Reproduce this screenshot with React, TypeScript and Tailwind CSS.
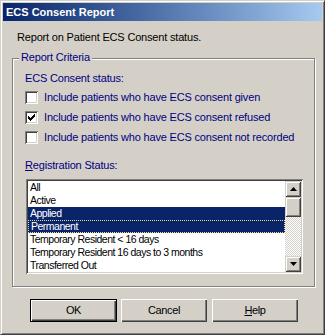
import React from "react";

const raised =
  "shadow-[inset_1px_1px_0_#d4d0c8,inset_-1px_-1px_0_#404040,inset_2px_2px_0_#fff,inset_-2px_-2px_0_#808080]";
const button =
  "shadow-[inset_1px_1px_0_#fff,inset_-1px_-1px_0_#404040,inset_-2px_-2px_0_#808080]";
const sunken =
  "shadow-[inset_1px_1px_0_#808080,inset_-1px_-1px_0_#fff,inset_2px_2px_0_#404040,inset_-2px_-2px_0_#d4d0c8]";

function Check() {
  const cols = [2, 3, 4, 3, 2, 1, 0];
  return (
    <svg width="7" height="7" viewBox="0 0 7 7">
      {cols.map((y, x) => (
        <rect key={x} x={x} y={y} width="1" height="3" fill="#000" />
      ))}
    </svg>
  );
}

function CheckRow({ label, checked }: { label: string; checked?: boolean }) {
  return (
    <div className="flex h-[20px] items-center">
      <div className={`flex h-[13px] w-[13px] items-center justify-center bg-white ${sunken}`}>
        {checked && <Check />}
      </div>
      <span className="ml-[6px] text-[#000080]">{label}</span>
    </div>
  );
}

function Arrow({ down }: { down?: boolean }) {
  return (
    <svg width="7" height="4" viewBox="0 0 7 4">
      <polygon points={down ? "0,0 7,0 3.5,4" : "3.5,0 7,4 0,4"} fill="#000" />
    </svg>
  );
}

const items = [
  "All",
  "Active",
  "Applied",
  "Permanent",
  "Temporary Resident < 16 days",
  "Temporary Resident 16 days to 3 months",
  "Transferred Out",
];

export default function App() {
  return (
    <div className="box-border flex h-[335px] w-[325px] flex-col border border-t-[#d4d0c8] border-l-[#d4d0c8] border-r-[#404040] border-b-[#404040] bg-[#d4d0c8] p-[2px] font-['Liberation_Sans',Arial,sans-serif] text-[11px] leading-[13px] tracking-[-0.18px] text-black shadow-[inset_1px_1px_0_#fff,inset_-1px_-1px_0_#808080]">
      <div className="flex h-[18px] shrink-0 items-center bg-linear-to-r from-[#0a246a] to-[#a6caf0] pl-[3px] text-[11px] font-bold tracking-normal text-white">
        ECS Consent Report
      </div>

      <div className="mt-[10px] pl-[14px]">Report on Patient ECS Consent status.</div>

      <div className="relative ml-[9px] mt-[14px] box-border h-[229px] w-[303px] shrink-0 border border-[#808080] pl-[12px] pt-[13px] shadow-[inset_1px_1px_0_#fff,1px_1px_0_#fff]">
        <span className="absolute -top-[8px] left-[6px] bg-[#d4d0c8] px-[2px] text-[#000080]">
          Report Criteria
        </span>
        <div className="text-[#000080]">ECS Consent status:</div>
        <div className="mt-[2px]">
          <CheckRow label="Include patients who have ECS consent given" />
          <CheckRow label="Include patients who have ECS consent refused" checked />
          <CheckRow label="Include patients who have ECS consent not recorded" />
        </div>
        <div className="mt-[12px] text-[#000080]">
          <span className="underline">R</span>egistration Status:
        </div>
        <div className={`ml-[1px] mt-[7px] box-border flex h-[95px] w-[277px] bg-white p-[2px] text-[10.5px] tracking-[-0.5px] ${sunken}`}>
          <div className="flex-1">
            {items.map((it) => {
              const sel = it === "Applied" || it === "Permanent";
              const focus = it === "Permanent";
              return (
                <div
                  key={it}
                  className={`box-border h-[13px] whitespace-nowrap pl-[2px] ${
                    sel ? "bg-[#0a246a] text-white" : ""
                  } ${focus ? "border border-dotted border-[#f3d98c] pl-[1px] leading-[11px]" : ""}`}
                >
                  {it}
                </div>
              );
            })}
          </div>
          <div className="flex w-[16px] flex-col">
            <div className={`flex h-[16px] items-center justify-center bg-[#d4d0c8] ${raised}`}>
              <Arrow />
            </div>
            <div className={`h-[20px] bg-[#d4d0c8] ${raised}`} />
            <div className="flex-1 bg-[image:repeating-conic-gradient(#fff_0_25%,#d4d0c8_0_50%)] bg-[length:2px_2px]" />
            <div className={`flex h-[16px] items-center justify-center bg-[#d4d0c8] ${raised}`}>
              <Arrow down />
            </div>
          </div>
        </div>
      </div>

      <div className="ml-[27px] mt-[12px] flex gap-[4px] text-[11px] tracking-[-0.4px]">
        <div className="box-border h-[23px] w-[87px] border border-black">
          <div className={`flex h-full items-center justify-center ${button}`}>OK</div>
        </div>
        <div className={`flex h-[23px] w-[86px] items-center justify-center ${button}`}>Cancel</div>
        <div className={`ml-[1px] flex h-[23px] w-[86px] items-center justify-center ${button}`}>
          <span className="underline">H</span>elp
        </div>
      </div>
    </div>
  );
}
